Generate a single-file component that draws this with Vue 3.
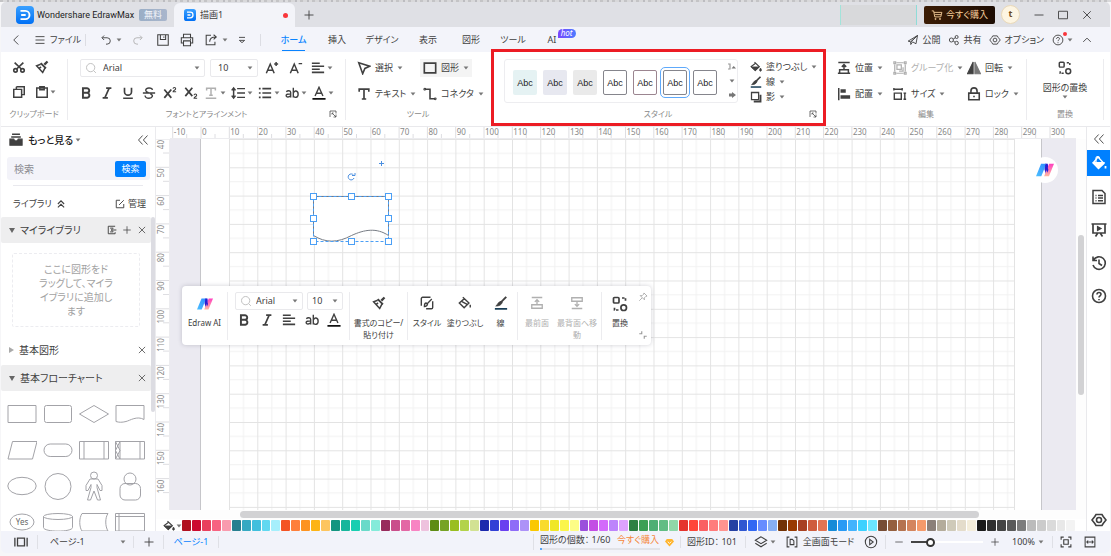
<script setup>
import { ref } from 'vue'

const query = ref('')
const zoom = ref(24)

const menus = ['挿入', 'デザイン', '表示', '図形', 'ツール']
const formats = [
  { icon: 'bold', label: '太字' },
  { icon: 'italic', label: '斜体' },
  { icon: 'underline', label: '下線' },
  { icon: 'strike', label: '取り消し線' },
  { icon: 'sup', label: '上付き' },
  { icon: 'sub', label: '下付き' }
]
const textTools = [
  { icon: 'textstyle', label: '文字効果', off: true },
  { icon: 'spacing', label: '行間' },
  { icon: 'list', label: '箇条書き' },
  { icon: 'case', label: '大文字と小文字' },
  { icon: 'fontcolor', label: '文字色' }
]
const arrange = [
  { icon: 'position', text: '位置' },
  { icon: 'group', text: 'グループ化', off: true },
  { icon: 'flip', text: '回転' },
  { icon: 'align', text: '配置' },
  { icon: 'size', text: 'サイズ' },
  { icon: 'lock', text: 'ロック' }
]
const swatches = ['teal', 'slate', 'gray', 'line', 'rose', 'line selected', 'line']

const palette = (
  'b0101f cc0a2f e9405d f76381 f99bae 277f90 36a9c2 41bfdd 61d8f0 a6effc ' +
  'f45323 fe7f3b fd9320 fdb415 fdc55f 139580 17b69c 19ceb1 6adac9 85ebda ' +
  '982b5c ca4e8b e368a5 f884c3 eec2de 5e8c14 76a325 99be20 b3d34a d2e293 ' +
  '1c29ad 3340d6 6a40f0 8f6cf8 ad92f8 fac800 f9db2d f0e726 fbf54a fdfd86 ' +
  '9b4fdc c34ee4 d36afb bd84fb dda2fd 2e8043 3b9f54 4faf74 61bd84 90d7a8 ' +
  'e5332d ff4639 fa6063 ff7c7c ff9490 2541a3 2f57d1 3268f3 668cff 87aff4 ' +
  '723205 993a00 a84022 cf5d3d e27453 158bd8 289af5 43b3fd 3cd1ff 6be6ff ' +
  '774d35 95603f b57350 d4855e f49a6b 8b8079 b4ac9b cfcab9 e4dccb f4eddb ' +
  '1a1a1a 303030 444444 5a5a5a 7c7c7c bbbbbb cbcbcb dadada e8e8e8 f3f3f3'
).split(' ').map(c => '#' + c)

const cm = 28.3
const xTicks = Array.from({ length: 32 }, (_, i) => ({ v: (i - 1) * 10, x: 31 + (i - 1) * cm }))
const yTicks = Array.from({ length: 13 }, (_, i) => ({ v: 40 + i * 10, y: i * cm }))
const handles = [[143, 57], [181, 57], [218, 57], [143, 79], [218, 79], [143, 102], [181, 102], [218, 102]]
</script>

<template>
  <div class="screen">
    <svg class="defs" aria-hidden="true">
      <defs>
        <linearGradient id="gBlue" x1="0" y1="0" x2="0" y2="1"><stop offset="0" stop-color="#3aa0ff" /><stop offset="1" stop-color="#0070f5" /></linearGradient>
        <linearGradient id="gL" x1="0" y1="1" x2="1" y2="0"><stop offset="0" stop-color="#4cc0ff" /><stop offset="1" stop-color="#2f8cff" /></linearGradient>
        <linearGradient id="gR" x1="0" y1="0" x2="0" y2="1"><stop offset="0" stop-color="#ff3fc0" /><stop offset="1" stop-color="#ffb9a0" /></linearGradient>
        <symbol id="i-caret" viewBox="0 0 6 6"><path d="M.6 1.600h4.800L3 4.600z" fill="currentColor" /></symbol>
        <symbol id="i-logo" viewBox="0 0 16 16"><rect width="16" height="16" rx="3.500" fill="url(#gBlue)" /><path d="M4 4.300h4.300a3.700 3.700 0 0 1 0 7.400H4M4.600 8h4" fill="none" stroke="#fff" stroke-width="1.700" /></symbol>
        <symbol id="i-ai" viewBox="0 0 16 16"><path d="M8 2.500h2.500L11.300 10l-2.500 2L7.500 7z" fill="#2a1fd0" /><path d="M4.500 2.500h4.700L4.700 13.500H0z" fill="url(#gL)" /><path d="M11.700 2.500H16l-4.500 11H7.200z" fill="url(#gR)" /><path d="M8 3.500 9.500 2.500 11 8l-1 2.500z" fill="#2a1fd0" /></symbol>
        <symbol id="i-back" viewBox="0 0 16 16"><path d="M11 2 5 8l6 6" /></symbol>
        <symbol id="i-menu" viewBox="0 0 16 16"><path d="M2 3.500h12M2 8h12M2 12.500h12" /></symbol>
        <symbol id="i-undo" viewBox="0 0 16 16"><path d="M5.500 2 2.500 5l3 3M3 5h6.500a4 4 0 0 1 0 8.500H8" /></symbol>
        <symbol id="i-redo" viewBox="0 0 16 16"><path d="M10.500 2l3 3-3 3M13 5H6.500a4 4 0 0 0 0 8.500H8" /></symbol>
        <symbol id="i-save" viewBox="0 0 16 16"><path d="M2 2h12v12H2zM5 2v5.500h6V2M9 4v1.500" /></symbol>
        <symbol id="i-print" viewBox="0 0 16 16"><path d="M4 5V1.500h8V5M4 11.500H1.500V5.500h13v6H12M4 9h8v5.500H4zM11.500 7.300h1" /></symbol>
        <symbol id="i-export" viewBox="0 0 16 16"><path d="M8 2.500H2.500v11h10V10M6.500 10c0-4 2.500-5.500 7-5.500M11 2l3 2.500-3 2.700" /></symbol>
        <symbol id="i-more" viewBox="0 0 16 16"><path d="M4 4.500h8M4.500 8.500 8 11.500l3.500-3z" /></symbol>
        <symbol id="i-plane" viewBox="0 0 16 16"><path d="M14 2 1.500 9.500l3.500 1zM14 2 12 13 7.500 10.500M14 2 5 10.500V14l2.500-3.500" /></symbol>
        <symbol id="i-share" viewBox="0 0 16 16"><circle cx="4.500" cy="8" r="2.700" /><circle cx="11.500" cy="4" r="2" /><circle cx="11.500" cy="12" r="2.300" /><path d="M7 6.700 9.800 5M7 9.500l2.400 1.400" /></symbol>
        <symbol id="i-gear" viewBox="0 0 16 16"><path d="M5 2.500h6l1.200 2 2.800 3.500-2.800 3.500-1.200 2H5l-1.200-2L1 8l2.800-3.500z" /><circle cx="8" cy="8" r="2.500" /></symbol>
        <symbol id="i-help" viewBox="0 0 16 16"><circle cx="8" cy="8" r="6.500" /><path d="M6 6.500C6 3.800 10 4 10 6.300 10 7.800 8 7.900 8 9.500M8 11v1.200" /></symbol>
        <symbol id="i-up" viewBox="0 0 16 16"><path d="m3 10.500 5-5 5 5" /></symbol>
        <symbol id="i-min" viewBox="0 0 16 16"><path d="M2 8h12" /></symbol>
        <symbol id="i-box" viewBox="0 0 16 16"><path d="M2 3h12v10H2z" /></symbol>
        <symbol id="i-x" viewBox="0 0 16 16"><path d="m3 3 10 10M13 3 3 13" /></symbol>
        <symbol id="i-plus" viewBox="0 0 16 16"><path d="M8 2v12M2 8h12" /></symbol>
        <symbol id="i-cart" viewBox="0 0 16 16"><path d="M1 2.500h2.500L5 10.500h8l1.500-6H4M5.500 7.500H13.500" /><circle cx="6" cy="13.300" r=".8" /><circle cx="12" cy="13.300" r=".8" /></symbol>
        <symbol id="i-cut" viewBox="0 0 16 16"><g stroke-width="1.900"><circle cx="4" cy="11.800" r="2" /><circle cx="12" cy="11.800" r="2" /><path d="M5.300 10.300 13 3M10.700 10.300 3 3" /></g></symbol>
        <symbol id="i-brush" viewBox="0 0 16 16"><path d="m14.300 1.700-3.600 3.600" stroke-width="2.600" /><path d="M6.500 3.500l6 6" stroke-width="2.200" /><path d="M6.500 4.800 1.800 6.700l7 7.500L11.500 9M4.500 9.500 7 8" stroke-width="1.700" /></symbol>
        <symbol id="i-copy" viewBox="0 0 16 16"><path d="M2 5h9v9H2zM5 2h9v9h-3M5 2v3" stroke-width="1.700" /></symbol>
        <symbol id="i-paste" viewBox="0 0 16 16"><path d="M2 3.500h12V14H2zM5.500 2h5v3.500h-5z" stroke-width="1.700" /></symbol>
        <symbol id="i-search" viewBox="0 0 16 16"><circle cx="7.500" cy="7.500" r="5.500" /><path d="m11.500 11.500 3 3" /></symbol>
        <symbol id="i-aplus" viewBox="0 0 16 16"><path d="M1.500 14 6 3.500 10.500 14M3.300 10.500h5.400M10.500 3.500H15M12.700 1.200v4.600" stroke-width="1.700" /></symbol>
        <symbol id="i-aminus" viewBox="0 0 16 16"><path d="M1.500 14 6 3.500 10.500 14M3.300 10.500h5.400M11 3h4" stroke-width="1.700" /></symbol>
        <symbol id="i-textalign" viewBox="0 0 16 16"><path d="M1 2.500h9M1 6h14M1 9.500h9M1 13h14" stroke-width="1.800" /></symbol>
        <symbol id="i-bold" viewBox="0 0 16 16"><path d="M4.500 2.500H9a2.600 2.600 0 0 1 0 5.300H4.500zM4.500 7.800h5a2.900 2.900 0 0 1 0 5.700h-5z" stroke-width="2.200" /></symbol>
        <symbol id="i-italic" viewBox="0 0 16 16"><path d="M7 2.500h6M3 13.500h6M10.500 2.500l-5 11" stroke-width="1.900" /></symbol>
        <symbol id="i-underline" viewBox="0 0 16 16"><path d="M4 2v4.500a4 4 0 0 0 8 0V2M2.500 14h11" stroke-width="1.900" /></symbol>
        <symbol id="i-strike" viewBox="0 0 16 16"><path d="M12 4.500C11.500 1.500 4 1.500 4.300 5c.2 1.500 1.500 2 3.200 2.500M1 8h14M9.500 9c4 1.500 2.500 5-1.500 5-3 0-4.300-1.300-4.500-3.200" stroke-width="1.600" /></symbol>
        <symbol id="i-sup" viewBox="0 0 16 16"><path d="m1.500 4 8 9.500M9.500 4l-8 9.500" stroke-width="2" /><path d="M11.500 3.200c0-2 3-2 3 0 0 1.300-3 2-3 3.300h3.500" stroke-width="1.200" /></symbol>
        <symbol id="i-sub" viewBox="0 0 16 16"><path d="m1.500 2 8 9.500M9.500 2l-8 9.500" stroke-width="2" /><path d="M11.500 10.700c0-2 3-2 3 0 0 1.300-3 2-3 3.300h3.500" stroke-width="1.200" /></symbol>
        <symbol id="i-textstyle" viewBox="0 0 16 16"><path d="M3 5V2.500h10V5M8 2.500v8M6 10.500h4M2 14h12" stroke-width="1.700" /></symbol>
        <symbol id="i-spacing" viewBox="0 0 16 16"><path d="M7 3h9M7 8h9M7 13h9M3 3v10M.8 5 3 2.300 5.200 5M.8 11 3 13.700 5.200 11" stroke-width="1.700" /></symbol>
        <symbol id="i-list" viewBox="0 0 16 16"><path d="M5 3h10M5 8h10M5 13h10M1 3h2M1 8h2M1 13h2" stroke-width="1.800" /></symbol>
        <symbol id="i-case" viewBox="0 0 16 16"><path d="M1.500 6.500C3 5 6.500 5 6.500 7.500V13M6.500 9C3 9 1.300 9.500 1.300 11s3 2.500 5.200 0M9.500 2v11M9.500 8c1-3.500 5.500-3 5.500 1.300S10.500 14 9.500 11" stroke-width="1.600" /></symbol>
        <symbol id="i-fontcolor" viewBox="0 0 16 16"><path d="m3.500 11.500 4.500-10 4.500 10M5 8.300h6" stroke-width="1.600" /><path d="M.5 14.700h15" stroke="#111" stroke-width="2" /></symbol>
        <symbol id="i-select" viewBox="0 0 16 16"><path d="M2 2 14.500 6 9 8.500 6.500 14.500z" stroke-width="1.800" /></symbol>
        <symbol id="i-rect" viewBox="0 0 16 16"><path d="M1.500 2.500h13v11h-13z" stroke-width="1.900" /></symbol>
        <symbol id="i-text" viewBox="0 0 16 16"><path d="M2.500 5.500V2.500h11v3M8 2.500v11M5.500 13.700h5" stroke-width="1.900" /></symbol>
        <symbol id="i-connector" viewBox="0 0 16 16"><path d="M2 2.500h6v11h6" stroke-width="1.800" /><circle cx="2" cy="2.500" r="1" /><circle cx="14" cy="13.500" r="1" /></symbol>
        <symbol id="i-fill" viewBox="0 0 16 16"><path d="m6 1.500 6.500 6.300-5.500 5-5.500-5.300L7.500 3" stroke-width="1.500" /><path d="M2 8h10l-5 4.700z" fill="currentColor" /><path d="M14 9.500c1.500 2 1.500 4 0 4s-1.500-2 0-4z" fill="currentColor" /></symbol>
        <symbol id="i-fillopen" viewBox="0 0 16 16"><path d="m5.500 1.500 7 6.500-5.500 5.500L1.500 8 7.300 3M4.500 6.500l6 3M14 10v3" stroke-width="1.600" /></symbol>
        <symbol id="i-pen" viewBox="0 0 16 16"><path d="m14 1-6.500 6.500" stroke-width="2.200" /><path d="m8 6 1.500 1.500C8 11 5 11.500 2 11.500 4.500 10 4 7 8 6z" fill="currentColor" stroke-width=".8" /><path d="M1 14.700h14" stroke="#173c55" stroke-width="2" /></symbol>
        <symbol id="i-shadow" viewBox="0 0 16 16"><path d="M2 2h9.500v9.500H2z" stroke-width="1.700" /><path d="M5 14h9V5" stroke-width="2.500" /></symbol>
        <symbol id="i-launch" viewBox="0 0 16 16"><path d="M2 14V2h12v5M14 14 6.500 6.500M14 9v5H9M6 9V6h3" stroke-width="1.500" /></symbol>
        <symbol id="i-position" viewBox="0 0 16 16"><path d="M1.500 1.700h13M3 10h10v4H3zM8 10V4.500M5.500 6.700 8 4.200l2.500 2.500M1 14h14" stroke-width="1.700" /></symbol>
        <symbol id="i-align" viewBox="0 0 16 16"><path d="M2 1v14" stroke-width="1.700" /><path d="M4 4.500h6M4 11.500h11" stroke-width="4" /></symbol>
        <symbol id="i-group" viewBox="0 0 16 16"><path d="M2 4v8M14 4v8M4 2h8M4 14h8M1 1h2v2H1zM13 1h2v2h-2zM1 13h2v2H1zM13 13h2v2h-2zM4.500 4.500h5v5h-5zM7 11.500h4.500V7" stroke-width="1.400" /></symbol>
        <symbol id="i-size" viewBox="0 0 16 16"><path d="M1 2.500h9.500M1 1v3M10.500 1v3M1.500 7h8v7h-8zM13.500 7v7M12 7h3M12 14h3" stroke-width="1.600" /></symbol>
        <symbol id="i-flip" viewBox="0 0 16 16"><path d="M7 1v13.500H.5z" fill="currentColor" /><path d="M9 1v13.500h6.500z" fill="currentColor" opacity=".7" /></symbol>
        <symbol id="i-lock" viewBox="0 0 16 16"><path d="M2 7h12v7.500H2zM4.500 7V4.500a3.500 3.500 0 0 1 7 0V7M8 10v1.700" stroke-width="1.800" /></symbol>
        <symbol id="i-replace" viewBox="0 0 16 16"><rect x="1.500" y="1.500" width="5.500" height="5.500" rx="1" stroke-width="1.700" /><circle cx="11.700" cy="11.700" r="2.800" stroke-width="1.700" /><path d="M10 2h3.500v3.500M6.500 14H2.500v-3.500" stroke-width="1.700" stroke-dasharray="2.500 1.200" /></symbol>
        <symbol id="i-drawer" viewBox="0 0 16 16"><path d="M3.500 1.500h9M2.500 4.500h11" stroke-width="1.700" /><path d="M1 7h4.500l1 2h3l1-2H15v7H1z" fill="currentColor" /></symbol>
        <symbol id="i-dleft" viewBox="0 0 16 16"><path d="M7.500 2 2 8l5.500 6M14 2 8.500 8l5.500 6" /></symbol>
        <symbol id="i-dup" viewBox="0 0 16 16"><path d="m3 8 5-5 5 5M3 13.500l5-5 5 5" stroke-width="1.800" /></symbol>
        <symbol id="i-edit" viewBox="0 0 16 16"><path d="M8 2H2v12h12V8M6.500 9.500 14 2" stroke-width="1.500" /></symbol>
        <symbol id="i-import" viewBox="0 0 16 16"><path d="M13 2H2v12h11v-2.500M5 5h5M5 11h5M15 8H7M9.500 5.500 7 8l2.500 2.500" stroke-width="1.500" /></symbol>
        <symbol id="i-styles" viewBox="0 0 16 16"><path d="M12 1.500H3a1.500 1.500 0 0 0-1.500 1.500V11M14.500 6v7a1.500 1.500 0 0 1-1.500 1.500H7" stroke-width="1.600" /><path d="m13.500 3.500-5 5M5 12c1 0 3-.5 3.500-2.500L7 8c-2 0-2 2-2 4z" stroke-width="1.500" /></symbol>
        <symbol id="i-front" viewBox="0 0 16 16"><path d="M2 1.700h12M2 10h12v4H2zM8 10V4.500M5.500 6.700 8 4.200l2.500 2.500" stroke-width="1.500" /></symbol>
        <symbol id="i-rear" viewBox="0 0 16 16"><path d="M2 14.300h12M2 2h12v4H2zM8 6v5.500M5.500 9.300 8 11.800l2.500-2.500" stroke-width="1.500" /></symbol>
        <symbol id="i-pin" viewBox="0 0 16 16"><path d="m9.500 1.500 5 5-2 .5-2.500 2.500.3 3-6.800-6.800 3 .3L9 3.500zM6.500 9.500l-4.500 4.500" /></symbol>
        <symbol id="i-shrink" viewBox="0 0 16 16"><path d="M2 6h4V2M14 10h-4v4" stroke-width="1.800" /></symbol>
        <symbol id="i-doc" viewBox="0 0 16 16"><path d="M2 1.500h9l3 3v10H2zM4.500 6.500h1M7 6.500h5M4.500 9h1M7 9h5M4.500 11.700h1M7 11.700h5" stroke-width="1.500" /></symbol>
        <symbol id="i-present" viewBox="0 0 16 16"><path d="M.5 2h15M2 2v9h12V2M4.500 14.500l2-3M11.500 14.500l-2-3" stroke-width="1.700" /><path d="M6.500 4.500v4l3.500-2z" fill="currentColor" /></symbol>
        <symbol id="i-history" viewBox="0 0 16 16"><path d="M2.500 5A6.300 6.300 0 1 1 2 10M2 1.500V5.500h4M8 4.500V8.500l3 2" stroke-width="1.600" /></symbol>
        <symbol id="i-bucket" viewBox="0 0 16 16"><path d="m7 2 6 6.500-5.500 5L2 8z" stroke-width="1.300" /><path d="M2.500 7.500h10.300L7.500 13z" fill="currentColor" /><path d="M5 7.500V3.500C5 .8 8.500.8 8.500 3.500" /><path d="M14.500 11v2.500" stroke-width="1.800" /></symbol>
        <symbol id="i-pages" viewBox="0 0 16 16"><path d="M4 3.500h8v9H4zM1 3v10M15 3v10" stroke-width="1.500" /></symbol>
        <symbol id="i-layers" viewBox="0 0 16 16"><path d="M8 2 1.500 6 8 10l6.500-4zM1.500 9.500l6.500 4 6.500-4" /></symbol>
        <symbol id="i-focus" viewBox="0 0 16 16"><path d="M4.500 1.500h-3v13h3M11.500 1.500h3v13h-3M5.500 4.500h3L10.500 6.500v5h-5z" stroke-width="1.400" /></symbol>
        <symbol id="i-play" viewBox="0 0 16 16"><circle cx="8" cy="8" r="6.500" /><path d="M6.500 5v6l4-3z" /></symbol>
        <symbol id="i-fit" viewBox="0 0 16 16"><path d="M1.500 5V1.500H5M11 1.500h3.500V5M14.500 11v3.500H11M5 14.500H1.500V11M5 5h6v6H5z" stroke-width="1.500" /></symbol>
        <symbol id="i-fitw" viewBox="0 0 16 16"><path d="M1.500 1.500h13v13h-13zM4 8h8M5.500 6 3.700 8l1.800 2M10.500 6l1.800 2-1.800 2" stroke-width="1.400" /></symbol>
      </defs>
    </svg>

    <header class="title">
      <svg class="ic logo"><use href="#i-logo" /></svg>
      <span class="brand">Wondershare EdrawMax</span>
      <span class="free">無料</span>
      <div class="doctab">
        <svg class="ic s12"><use href="#i-logo" /></svg>
        <span>描画1</span>
        <i class="dot"></i>
      </div>
      <button class="b newtab" aria-label="新しいタブ"><svg class="ic s12"><use href="#i-plus" /></svg></button>
      <span class="grow"></span>
      <span class="masked"></span>
      <button class="buy"><svg class="ic s12"><use href="#i-cart" /></svg>今すぐ購入</button>
      <span class="avatar">t</span>
      <button class="b win" aria-label="最小化"><svg class="ic s12"><use href="#i-min" /></svg></button>
      <button class="b win" aria-label="最大化"><svg class="ic s12"><use href="#i-box" /></svg></button>
      <button class="b win" aria-label="閉じる"><svg class="ic s12"><use href="#i-x" /></svg></button>
    </header>

    <nav class="menubar">
      <button class="b w30" aria-label="戻る"><svg class="ic s12"><use href="#i-back" /></svg></button>
      <button class="b file"><svg class="ic s12"><use href="#i-menu" /></svg>ファイル</button>
      <i class="vr"></i>
      <div class="quick">
        <button class="b" aria-label="元に戻す"><svg class="ic s12"><use href="#i-undo" /></svg><svg class="caret"><use href="#i-caret" /></svg></button>
        <button class="b off" aria-label="やり直し"><svg class="ic s12"><use href="#i-redo" /></svg></button>
        <button class="b" aria-label="保存"><svg class="ic s14"><use href="#i-save" /></svg></button>
        <button class="b" aria-label="印刷"><svg class="ic s14"><use href="#i-print" /></svg></button>
        <button class="b" aria-label="エクスポート"><svg class="ic s14"><use href="#i-export" /></svg><svg class="caret"><use href="#i-caret" /></svg></button>
        <button class="b" aria-label="その他"><svg class="ic s12"><use href="#i-more" /></svg></button>
      </div>
      <i class="vr"></i>
      <div class="tabs">
        <a class="on" href="#home"><span>ホーム</span></a>
        <a v-for="m in menus" :key="m" :href="'#' + m">{{ m }}</a>
        <a href="#ai"><span>AI<em>hot</em></span></a>
      </div>
      <span class="grow"></span>
      <div class="links">
        <button class="b"><svg class="ic s12"><use href="#i-plane" /></svg>公開</button>
        <button class="b"><svg class="ic s12"><use href="#i-share" /></svg>共有</button>
        <button class="b"><svg class="ic s12"><use href="#i-gear" /></svg>オプション</button>
        <button class="b help" aria-label="ヘルプ"><svg class="ic s12"><use href="#i-help" /></svg><i class="dot"></i><svg class="caret"><use href="#i-caret" /></svg></button>
        <button class="b" aria-label="リボンを折りたたむ"><svg class="ic s12"><use href="#i-up" /></svg></button>
      </div>
    </nav>

    <section class="ribbon">
      <div class="group clip">
        <div class="row"><button class="b" aria-label="切り取り"><svg class="ic s14"><use href="#i-cut" /></svg></button><button class="b" aria-label="書式のコピー"><svg class="ic s14"><use href="#i-brush" /></svg></button></div>
        <div class="row"><button class="b" aria-label="コピー"><svg class="ic s14"><use href="#i-copy" /></svg></button><button class="b" aria-label="貼り付け"><svg class="ic s14"><use href="#i-paste" /></svg><svg class="caret"><use href="#i-caret" /></svg></button></div>
        <p>クリップボード</p>
      </div>
      <div class="group font">
        <div class="row first">
          <label class="combo family"><svg class="ic s12 pale"><use href="#i-search" /></svg><select aria-label="フォント"><option>Arial</option></select><svg class="caret"><use href="#i-caret" /></svg></label>
          <label class="combo points"><select aria-label="サイズ"><option>10</option></select><svg class="caret"><use href="#i-caret" /></svg></label>
          <button class="b w24" aria-label="拡大"><svg class="ic s14"><use href="#i-aplus" /></svg></button>
          <button class="b w24" aria-label="縮小"><svg class="ic s14"><use href="#i-aminus" /></svg></button>
          <button class="b drop" aria-label="文字揃え"><svg class="ic s14"><use href="#i-textalign" /></svg><svg class="caret"><use href="#i-caret" /></svg></button>
        </div>
        <div class="row">
          <button v-for="f in formats" :key="f.icon" class="b w21" :aria-label="f.label"><svg class="ic s14"><use :href="'#i-' + f.icon" /></svg></button>
          <button v-for="f in textTools" :key="f.icon" class="b drop" :class="{ off: f.off }" :aria-label="f.label"><svg class="ic s14"><use :href="'#i-' + f.icon" /></svg><svg class="caret"><use href="#i-caret" /></svg></button>
        </div>
        <p>フォントとアラインメント</p>
        <button class="b launch" aria-label="フォント設定"><svg class="ic s8"><use href="#i-launch" /></svg></button>
      </div>
      <div class="group tools">
        <div class="pairs">
          <button class="b lab"><svg class="ic s14"><use href="#i-select" /></svg>選択<svg class="caret"><use href="#i-caret" /></svg></button>
          <button class="b lab pressed"><svg class="ic s14"><use href="#i-rect" /></svg>図形<svg class="caret"><use href="#i-caret" /></svg></button>
          <button class="b lab"><svg class="ic s14"><use href="#i-text" /></svg>テキスト<svg class="caret"><use href="#i-caret" /></svg></button>
          <button class="b lab second"><svg class="ic s14"><use href="#i-connector" /></svg>コネクタ<svg class="caret"><use href="#i-caret" /></svg></button>
        </div>
        <p>ツール</p>
      </div>
      <div class="group style">
        <div class="stylebody">
          <div class="gallery">
            <button v-for="(s, i) in swatches" :key="i" class="sw" :class="s">Abc</button>
            <div class="scroller">
              <button class="b" aria-label="上へ"><svg class="ic s8" viewBox="0 0 8 8"><path d="M0 1h2v5H0" stroke="#999" /><path d="M3.500 5.500h4.500L5.700 3z" fill="#777" stroke="none" /></svg></button>
              <button class="b" aria-label="下へ"><svg class="caret"><use href="#i-caret" /></svg></button>
              <button class="b" aria-label="すべて表示"><svg class="ic s8" viewBox="0 0 8 8"><path d="M1 2.500h3V1l4 3-4 3V5.500H1z" fill="#777" stroke="none" /></svg></button>
            </div>
          </div>
          <div class="effects">
            <button class="b lab"><svg class="ic s12"><use href="#i-fill" /></svg>塗りつぶし<svg class="caret"><use href="#i-caret" /></svg></button>
            <button class="b lab"><svg class="ic s12"><use href="#i-pen" /></svg>線<svg class="caret"><use href="#i-caret" /></svg></button>
            <button class="b lab"><svg class="ic s12"><use href="#i-shadow" /></svg>影<svg class="caret"><use href="#i-caret" /></svg></button>
          </div>
        </div>
        <p>スタイル</p>
        <button class="b launch" aria-label="スタイル設定"><svg class="ic s8"><use href="#i-launch" /></svg></button>
      </div>
      <div class="group arrange">
        <div class="triples">
          <button v-for="a in arrange" :key="a.icon" class="b lab" :class="{ off: a.off }"><svg class="ic s14"><use :href="'#i-' + a.icon" /></svg>{{ a.text }}<svg class="caret"><use href="#i-caret" /></svg></button>
        </div>
        <p>編集</p>
      </div>
      <div class="group swap">
        <button class="b tall"><svg class="ic s14"><use href="#i-replace" /></svg>図形の置換<svg class="caret"><use href="#i-caret" /></svg></button>
        <p>置換</p>
      </div>
    </section>

    <main class="body">
      <aside class="panel">
        <div class="phead"><svg class="ic s14"><use href="#i-drawer" /></svg><b>もっと見る</b><svg class="caret"><use href="#i-caret" /></svg><span class="grow"></span><button class="b" aria-label="パネルを閉じる"><svg class="ic s12"><use href="#i-dleft" /></svg></button></div>
        <form class="search" @submit.prevent><input v-model="query" type="text" placeholder="検索" aria-label="図形を検索"><button>検索</button></form>
        <hr>
        <div class="lib"><span>ライブラリ</span><svg class="ic s10"><use href="#i-dup" /></svg><span class="grow"></span><button class="b"><svg class="ic s10"><use href="#i-edit" /></svg>管理</button></div>
        <div class="scrollable">
          <div class="sect open"><i class="tri"></i>マイライブラリ<span class="grow"></span>
            <button class="b" aria-label="読み込み"><svg class="ic s10"><use href="#i-import" /></svg></button>
            <button class="b" aria-label="追加"><svg class="ic s10"><use href="#i-plus" /></svg></button>
            <button class="b" aria-label="閉じる"><svg class="ic s10"><use href="#i-x" /></svg></button>
          </div>
          <div class="dropzone">ここに図形をド<br>ラッグして、マイラ<br>イブラリに追加し<br>ます</div>
          <div class="sect"><i class="tri side"></i>基本図形<span class="grow"></span><button class="b" aria-label="閉じる"><svg class="ic s10"><use href="#i-x" /></svg></button></div>
          <div class="sect open last"><i class="tri"></i>基本フローチャート<span class="grow"></span><button class="b" aria-label="閉じる"><svg class="ic s10"><use href="#i-x" /></svg></button></div>
          <div class="shapes">
            <svg viewBox="0 0 30 30"><path d="M1 6.500h28v17H1z" /></svg>
            <svg viewBox="0 0 30 30"><rect x="1.500" y="6.500" width="27" height="17" rx="2" /></svg>
            <svg viewBox="0 0 30 30"><path d="m15 6.500 14.500 8.500L15 23.500.5 15z" /></svg>
            <svg viewBox="0 0 30 30"><path d="M1 6.500h28v14c-7-4-14 1-18 2-4 1-7 1-10 0z" /></svg>
            <svg viewBox="0 0 30 30"><path d="M5.500 6.500H30L25.500 24H1z" /></svg>
            <svg viewBox="0 0 30 30"><rect x="1" y="9" width="28" height="12.500" rx="6.200" /></svg>
            <svg viewBox="0 0 30 30"><path d="M.5 6.500h29V24H.5zM5 6.500V24M25 6.500V24" /></svg>
            <svg viewBox="0 0 30 30"><path d="M.5 6.500h29V24H.5zM5 6.500V24M25 6.500V24M.5 6.500 5 15.500.5 24M5 6.500.5 15.500 5 24" /></svg>
            <svg viewBox="0 0 30 30"><ellipse cx="15" cy="15" rx="14.200" ry="8.700" /></svg>
            <svg viewBox="0 0 30 30"><circle cx="15" cy="15.500" r="13" /></svg>
            <svg viewBox="0 0 30 30"><circle cx="15" cy="4.500" r="3.500" /><path d="M11 8h8l4 6.500v5h-2l-3-6v3L21.500 29h-3L15 20l-3.500 9h-3L12 16.500v-3l-3 6H7v-5z" /></svg>
            <svg viewBox="0 0 30 30"><circle cx="15" cy="8" r="6" /><rect x="5" y="12.500" width="20.500" height="16.500" rx="5" /></svg>
            <svg viewBox="0 0 30 30"><ellipse cx="15" cy="15" rx="12" ry="8" /><text x="15" y="18">Yes</text></svg>
            <svg viewBox="0 0 30 30"><path d="M.5 9.500v11C.500 25.300 29.500 25.300 29.500 20.500v-11" /><ellipse cx="15" cy="9.500" rx="14.500" ry="3" /></svg>
            <svg viewBox="0 0 30 30"><path d="M3 6.500h26c-3 4-3 13 0 17.500H3c-3-4-3-13 0-17.500z" /></svg>
            <svg viewBox="0 0 30 30"><path d="M.5 6.500h29V24H.5zM4 6.500V24M.5 9.500h29" /></svg>
          </div>
        </div>
      </aside>

      <section class="work">
        <div class="corner"></div>
        <svg class="hruler">
          <g v-for="t in xTicks" :key="t.v">
            <path :d="`M${t.x} 0V13M${t.x + 14} 7V13`" />
            <text :x="t.x + 1" y="8">{{ t.v }}</text>
          </g>
        </svg>
        <div class="corner"></div>
        <svg class="vruler">
          <g v-for="t in yTicks" :key="t.v">
            <path :d="`M0 ${t.y}H14M7 ${t.y + 14}H14`" />
            <text :transform="`translate(8 ${t.y + 1}) rotate(-90)`">{{ t.v }}</text>
          </g>
        </svg>
        <div class="canvas">
          <svg class="sheet">
            <defs>
              <pattern id="grid" x="59" y="0" width="28.300" height="28.300" patternUnits="userSpaceOnUse">
                <path d="M14.500 0V28.300M0 14.500H28.300" stroke="#f1f1f1" fill="none" />
                <path d="M.5 0V28.300M0 .5H28.300" stroke="#e3e3e3" fill="none" />
              </pattern>
            </defs>
            <rect x="30.500" y="-5" width="841" height="700" fill="#fff" stroke="#c6c6ca" />
            <rect x="59" y="0" width="785" height="700" fill="url(#grid)" />
            <path d="M844.500 0V700" stroke="#e3e3e3" />
            <path class="doc" d="M143.500 57.500h75V96.500c-12-8-24-6-37 0-14 7.500-26 7.500-38 0z" />
            <path class="sel" d="M143.500 57.500h75v45h-75z" />
            <rect v-for="(h, i) in handles" :key="i" class="handle" :x="h[0] - 2.5" :y="h[1] - 2.5" width="6" height="6" />
            <path class="rot" d="M183.500 36a3 3 0 1 0 .5 3M182 36.500h3v-2.500" />
            <path class="rot" d="M209 24.500h5M211.500 22v5" />
          </svg>
          <button class="aibadge" aria-label="Edraw AI"><svg class="ic"><use href="#i-ai" /></svg></button>
          <div class="float">
            <button class="b cell ai"><svg class="ic s16"><use href="#i-ai" /></svg>Edraw AI</button>
            <div class="mini">
              <div class="row">
                <label class="combo family"><svg class="ic s12 pale"><use href="#i-search" /></svg><select aria-label="フォント"><option>Arial</option></select><svg class="caret"><use href="#i-caret" /></svg></label>
                <label class="combo points"><select aria-label="サイズ"><option>10</option></select><svg class="caret"><use href="#i-caret" /></svg></label>
              </div>
              <div class="row spread">
                <button v-for="n in ['bold', 'italic', 'textalign', 'case', 'fontcolor']" :key="n" class="b" :aria-label="n"><svg class="ic s14"><use :href="'#i-' + n" /></svg></button>
              </div>
            </div>
            <button class="b cell copyfmt"><svg class="ic s14"><use href="#i-brush" /></svg><span>書式のコピー/<br>貼り付け</span></button>
            <div class="trio">
              <button class="b cell"><svg class="ic s14"><use href="#i-styles" /></svg>スタイル</button>
              <button class="b cell"><svg class="ic s14"><use href="#i-fillopen" /></svg>塗りつぶし</button>
              <button class="b cell"><svg class="ic s14"><use href="#i-pen" /></svg>線</button>
            </div>
            <div class="duo">
              <button class="b cell off"><svg class="ic s14"><use href="#i-front" /></svg>最前面</button>
              <button class="b cell off"><svg class="ic s14"><use href="#i-rear" /></svg><span>最背面へ移<br>動</span></button>
            </div>
            <button class="b cell rep"><svg class="ic s16"><use href="#i-replace" /></svg>置換</button>
            <div class="pins"><svg class="ic s10"><use href="#i-pin" /></svg><svg class="ic s10"><use href="#i-shrink" /></svg></div>
          </div>
        </div>
        <div class="vscroll"><i></i></div>
        <div class="hscroll"><i></i></div>
        <div class="colors">
          <button class="b bucket" aria-label="塗りつぶし色"><svg class="ic s12"><use href="#i-fill" /></svg><svg class="caret"><use href="#i-caret" /></svg></button>
          <i v-for="(c, i) in palette" :key="i" class="chip" :style="{ background: c }"></i>
        </div>
      </section>

      <aside class="rail">
        <button class="b slim" aria-label="展開"><svg class="ic s12"><use href="#i-dleft" /></svg></button>
        <button class="b active" aria-label="塗りつぶし"><svg class="ic s16"><use href="#i-bucket" /></svg></button>
        <button class="b" aria-label="ページ"><svg class="ic s16"><use href="#i-doc" /></svg></button>
        <button class="b" aria-label="プレゼンテーション"><svg class="ic s16"><use href="#i-present" /></svg></button>
        <button class="b" aria-label="履歴"><svg class="ic s16"><use href="#i-history" /></svg></button>
        <button class="b" aria-label="ヘルプ"><svg class="ic s16 thick"><use href="#i-help" /></svg></button>
        <span class="grow"></span>
        <button class="b slim" aria-label="設定"><svg class="ic s16 thick"><use href="#i-gear" /></svg></button>
      </aside>
    </main>

    <footer class="status">
      <button class="b pages" aria-label="ページ一覧"><svg class="ic s14"><use href="#i-pages" /></svg></button>
      <label class="pagesel"><select aria-label="ページ"><option>ページ-1</option></select><svg class="caret"><use href="#i-caret" /></svg></label>
      <button class="b add" aria-label="ページを追加"><svg class="ic s12"><use href="#i-plus" /></svg></button>
      <a class="page" href="#page1">ページ-1</a>
      <span class="grow"></span>
      <div class="count">
        <div><span>図形の個数： 1/60</span><a href="#buy">今すぐ購入</a></div>
        <progress value="1" max="60" aria-label="図形の個数"></progress>
      </div>
      <svg class="gem" viewBox="0 0 10 10"><path d="M2 1h6l2 3-5 5.500L0 4z" fill="#ffb52e" /><path d="m3 4 2 2 2-2" fill="none" stroke="#fff" /></svg>
      <span class="ident">図形ID： 101</span>
      <div class="modes">
        <button class="b" aria-label="レイヤー"><svg class="ic s14"><use href="#i-layers" /></svg><svg class="caret"><use href="#i-caret" /></svg></button>
        <button class="b full"><svg class="ic s12"><use href="#i-focus" /></svg>全画面モード</button>
        <button class="b" aria-label="再生"><svg class="ic s14"><use href="#i-play" /></svg></button>
      </div>
      <div class="zoom">
        <button class="b" aria-label="縮小"><svg class="ic s10"><use href="#i-min" /></svg></button>
        <input v-model="zoom" type="range" min="0" max="100" aria-label="ズーム">
        <button class="b" aria-label="拡大"><svg class="ic s10"><use href="#i-plus" /></svg></button>
        <button class="b pct">100%<svg class="caret"><use href="#i-caret" /></svg></button>
      </div>
      <div class="fits">
        <button class="b" aria-label="全体表示"><svg class="ic s12"><use href="#i-fit" /></svg></button>
        <button class="b" aria-label="幅に合わせる"><svg class="ic s12"><use href="#i-fitw" /></svg></button>
      </div>
    </footer>
  </div>
</template>

<style>
html, body { margin: 0; background: #f4f4f5; }
</style>

<style scoped>
.screen {
  display: flex; flex-direction: column; height: 100vh; min-height: 480px; padding: 2px 1px 3px; box-sizing: border-box;
  background: repeating-linear-gradient(90deg, #c4c4c6 0 3px, #d8d8da 3px 7px, #bcbcc0 7px 9px, #dcdcde 9px 12px) top / 100% 2px no-repeat, #f6f6f8;
  color: #404040; font: 9px/12px "Noto Sans", "Noto Sans CJK JP", sans-serif; font-feature-settings: "palt";
}
.screen * { box-sizing: border-box; }
.defs { position: absolute; width: 0; height: 0; }
.grow { flex: 1; }
.b { display: flex; align-items: center; justify-content: center; padding: 0; border: 0; background: none; color: inherit; font: inherit; font-feature-settings: inherit; white-space: nowrap; }
.ic { flex: none; width: 14px; height: 14px; fill: none; stroke: currentColor; stroke-width: 1.2; color: #404040; }
.s8 { width: 8px; height: 8px; }
.s10 { width: 10px; height: 10px; }
.s12 { width: 12px; height: 12px; }
.s14 { width: 14px; height: 14px; }
.s16 { width: 16px; height: 16px; }
.thick { stroke-width: 1.6; }
.ic.pale { color: #bbb; }
.ic.logo { width: 18px; height: 18px; }
.logo, .doctab .ic, .aibadge .ic, .ai .ic { stroke: none; }
.caret { flex: none; width: 6px; height: 6px; color: #777; }
.off, .off .ic { color: #b0b0b0; }
.dot { width: 5px; height: 5px; border-radius: 50%; background: #f9363b; }
.vr { width: 1px; height: 12px; background: #dcdde3; }
select { appearance: none; flex: 1; min-width: 0; border: 0; padding: 0; background: none; color: inherit; font: inherit; font-feature-settings: inherit; }

.title { display: flex; align-items: center; flex: none; height: 25px; padding: 0 11px 0 15px; background: #dfe0e5; border-radius: 5px 5px 0 0; }
.brand { margin-left: 3px; width: 98px; white-space: nowrap; color: #222; font-family: Roboto, sans-serif; }
.free { margin-left: 4px; padding: 0 5px; border-radius: 2px; background: linear-gradient(90deg, #9aaec6, #a9b6cc); color: #f2f5fa; }
.doctab { display: flex; align-items: center; gap: 4px; width: 121px; height: 24px; margin: 1px 0 0 7px; padding: 0 7px 0 10px; border-radius: 6px 6px 0 0; background: #f3f4f9; }
.doctab .dot { margin-left: auto; }
.newtab { width: 28px; }
.masked { width: 77px; height: 20px; background: #d8d9db; border-left: 1px solid #a2e3da; border-right: 1px solid #8fdcd8; }
.buy { display: flex; align-items: center; justify-content: center; gap: 3px; width: 71px; height: 18px; margin: 0 6px 0 7px; padding: 0; border: 0; border-radius: 2px; background: linear-gradient(90deg, #3c1d05, #1c0c02); color: #f7cf9b; font: inherit; font-feature-settings: inherit; white-space: nowrap; }
.buy .ic { color: #f7cf9b; }
.avatar { width: 19px; height: 19px; margin-right: 7px; border-radius: 50%; border: 1px solid #ead9b8; background: #fdf5e2; color: #6b4a1a; font-weight: 700; line-height: 16px; text-align: center; }
.win { width: 24px; }

.menubar { display: flex; align-items: center; flex: none; height: 25px; background: #f3f4fa; }
.w30 { width: 30px; }
.file { width: 54px; gap: 4px; justify-content: flex-start; padding-left: 3px; }
.quick { display: flex; align-items: center; width: 174px; padding-left: 14px; }
.quick .b { width: 24px; justify-content: flex-start; gap: 4px; }
.quick .b:first-child, .quick .b:nth-child(5) { width: 32px; }
.tabs { display: grid; grid-template-columns: 43px 44px 46px 46px 40px 44px 34px; padding-left: 11px; }
.tabs a { color: inherit; text-align: center; text-decoration: none; line-height: 25px; white-space: nowrap; }
.tabs span { position: relative; }
.tabs a.on { color: #0a84ff; font-weight: 500; }
.tabs a.on span { display: inline-block; }
.tabs a.on span::after { content: ""; position: absolute; left: 1px; right: 1px; bottom: 1px; height: 1px; background: #0a84ff; }
.tabs em { position: absolute; left: 10px; top: -4px; width: 18px; height: 9px; border-radius: 5px 5px 5px 0; background: linear-gradient(90deg, #7a45ff, #4c7dff); color: #fff; font-size: 8px; line-height: 8px; text-align: center; }
.links { display: flex; align-items: center; gap: 8px; padding-right: 17px; }
.links .b { gap: 3px; }
.help { position: relative; }
.help .dot { position: absolute; left: 11px; top: -2px; width: 4px; height: 4px; }

.ribbon { display: grid; grid-template-columns: 67fr 278fr 144fr 336fr 201fr 77fr; flex: none; padding: 7px 6px 6px 0; background: #fff; }
.group { position: relative; display: flex; flex-direction: column; border-right: 1px solid #ececef; height: 61px; }
.group.tools, .group.style { border-right: 0; }
.group .row { display: flex; align-items: center; height: 18px; margin-bottom: 8px; }
.group p { margin: auto 0 0; color: #8a8a8a; font-size: 8px; text-align: center; line-height: 12px; white-space: nowrap; }
.clip .row { padding-left: 11px; gap: 9px; }
.clip .b { gap: 1px; }
.font .row { padding-left: 7px; }
.font .row.first { padding-left: 12px; }
.combo { display: flex; align-items: center; height: 18px; padding: 0 4px; border: 1px solid #e9e9ec; border-radius: 2px; background: #fff; }
.family { width: 125px; gap: 6px; }
.points { width: 48px; margin: 0 2px 0 5px; padding-left: 7px; }
.w24 { width: 24px; }
.w21 { width: 21px; }
.drop { width: 27px; gap: 2px; }
.launch { position: absolute; right: 8px; bottom: 2px; }
.lab { height: 18px; justify-content: flex-start; gap: 4px; }
.pairs, .triples { display: grid; row-gap: 8px; justify-items: start; }
.pairs { grid-template-columns: 63px 1fr; padding-left: 11px; }
.pressed { padding: 0 3px; background: #f4f4f4; }
.second { padding-left: 3px; }
.triples { grid-template-columns: 56px 74px 1fr; padding-left: 11px; }
.swap .tall { flex-direction: column; line-height: 14px; padding-top: 2px; gap: 6px; }
.swap .tall .caret { margin-top: -7px; }
.style::after { content: ""; position: absolute; inset: -10px 0 -6px 1px; border: 3px solid #ec1c24; pointer-events: none; }
.style .launch { right: 9px; }
.stylebody { display: flex; padding-left: 14px; }
.gallery { display: flex; align-items: center; gap: 6px; width: 234px; height: 44px; padding: 3px 0 0 8px; border: 1px solid #ededf0; border-radius: 3px; }
.sw { flex: none; width: 24px; height: 25px; padding: 0; border: 1px solid transparent; border-radius: 2px; background: #fff; color: #222; font: 9px/12px "Liberation Sans", sans-serif; }
.sw.teal { background: #e5f2f3; }
.sw.slate { background: #e7e8f0; }
.sw.gray { background: #eaeaea; }
.sw.line { border-color: #85858c; }
.sw.rose { border-color: #9b8590; }
.sw.selected { outline: 1px solid #5ea9fb; outline-offset: 2px; }
.scroller { display: flex; flex-direction: column; align-items: center; justify-content: space-between; width: 10px; height: 36px; margin: -3px 0 0 4px; }
.effects { display: flex; flex-direction: column; margin-left: 12px; }
.effects .lab { height: 15px; }

.body { display: grid; grid-template-columns: 155px 1fr 24px; flex: 1; min-height: 0; border-top: 1px solid #e9e9ec; background: #fff; }
.panel { display: flex; flex-direction: column; min-height: 0; border-right: 1px solid #ebebee; font-size: 10px; line-height: 14px; }
.phead { display: flex; align-items: center; height: 26px; padding: 0 6px 0 8px; gap: 5px; color: #222; }
.phead .caret { margin-left: -3px; }
.phead b { font-weight: 500; }
.search { display: flex; align-items: center; height: 23px; margin: 4px 5px 0 6px; padding: 0 4px 0 7px; border-radius: 3px; background: #f3f3f9; }
.search input { flex: 1; min-width: 0; padding: 0; border: 0; background: none; font: inherit; color: #333; outline: 0; }
.search input::placeholder { color: #8c8c92; }
.search button { width: 31px; height: 16px; padding: 0; border: 0; border-radius: 2px; background: #0080ff; color: #fff; font: 9px/14px "Noto Sans", "Noto Sans CJK JP", sans-serif; }
.panel hr { width: 130px; height: 1px; margin: 5px 0 0 12px; border: 0; background: #e9e9ee; }
.lib { display: flex; align-items: center; height: 31px; padding: 4px 9px 0 12px; gap: 4px; font-size: 9px; }
.lib .b { gap: 3px; }
.scrollable { position: relative; flex: 1; min-height: 0; overflow: hidden; padding-right: 4px; }
.scrollable::after { content: ""; position: absolute; right: 0; top: 0; width: 4px; height: 62%; border-radius: 2px; background: #dcdce2; }
.sect { display: flex; align-items: center; height: 26px; padding: 0 4px 0 8px; gap: 5px; }
.sect.open { background: #eeeeef; border-radius: 2px; }
.sect.last { margin-top: 2px; }
.tri { border: 3px solid transparent; border-top: 5px solid #666; border-bottom: 0; }
.tri.side { border: 3px solid transparent; border-left: 5px solid #aaa; border-right: 0; }
.dropzone { width: 128px; margin: 10px 0 10px 11px; padding: 8px 0; border: 1px dashed #ececf0; border-radius: 2px; color: #a2a2a2; text-align: center; }
.shapes { display: grid; grid-template-columns: repeat(4, 36px); padding: 5px 0 0 3px; }
.shapes svg { width: 30px; height: 36px; margin: 0 3px; fill: none; stroke: #a3a3a8; stroke-width: 1; }
.shapes text { font-size: 8px; fill: #666; stroke: none; text-anchor: middle; }

.work { display: grid; grid-template-columns: 14px 1fr 10px; grid-template-rows: 12px 1fr 9px 12px; min-width: 0; min-height: 0; overflow: hidden; }
.hruler, .vruler { display: block; width: 100%; height: 100%; overflow: hidden; background: #fff; }
.hruler { border-bottom: 1px solid #ececef; }
.vruler { border-right: 1px solid #ececef; }
.hruler path, .vruler path { stroke: #dedee2; }
.hruler text, .vruler text { font-size: 8px; fill: #888; }
.vruler text { text-anchor: end; }
.canvas { position: relative; min-height: 0; background: #ebeaf1; }
.sheet { position: absolute; inset: 0; width: 100%; height: 100%; overflow: hidden; }
.doc { fill: #fff; stroke: #777c84; }
.sel { fill: none; stroke: #4b9ff5; stroke-dasharray: 3 2; }
.handle { fill: #fff; stroke: #4b9ff5; }
.rot { fill: none; stroke: #4b8fe0; }
.aibadge { position: absolute; right: 18px; top: 18px; display: grid; place-items: center; width: 26px; height: 26px; padding: 0; border: 0; border-radius: 50%; background: #fff; }
.aibadge .ic { width: 18px; height: 18px; }
.vscroll, .hscroll { position: relative; background: #fdfdfd; }
.vscroll i { position: absolute; left: 2px; top: 26%; width: 6px; height: 43%; border-radius: 3px; background: #d2d2d4; }
.hscroll { grid-column: 1 / 4; }
.hscroll i { position: absolute; left: 9%; right: 11.5%; top: 1px; height: 7px; border-radius: 4px; background: #d2d2d4; }
.colors { grid-column: 1 / 4; display: flex; gap: 1px; padding: 1px 10px 0 7px; background: #fff; }
.bucket { width: 18px; gap: 1px; }
.chip { flex: 1; height: 11px; border-radius: 1px; }

.float { position: absolute; left: 12px; top: 147px; display: flex; height: 59px; padding: 6px 3px 5px 0; border-radius: 4px; background: #fff; box-shadow: 0 0 4px rgba(60, 60, 80, .25); }
.cell { flex-direction: column; justify-content: flex-start; gap: 7px; font-size: 8px; line-height: 12px; padding-top: 4px; }
.float .ai { width: 46px; border-right: 1px solid #ececef; gap: 5px; }
.mini { width: 122px; padding-left: 7px; border-right: 1px solid #ececef; }
.mini .row { display: flex; margin-bottom: 3px; }
.mini .family { width: 68px; padding-left: 4px; gap: 4px; }
.mini .points { width: 36px; margin: 0 0 0 4px; padding-left: 4px; }
.mini .spread { justify-content: space-between; padding: 0 8px 0 2px; }
.copyfmt { width: 58px; border-right: 1px solid #ececef; }
.trio { display: grid; grid-template-columns: 38px 38px 33px; width: 110px; border-right: 1px solid #ececef; }
.duo { display: grid; grid-template-columns: 38px 42px; width: 84px; border-right: 1px solid #ececef; }
.rep { width: 36px; gap: 5px; }
.pins { display: flex; flex-direction: column; justify-content: space-between; }
.pins .ic { color: #999; }

.rail { display: flex; flex-direction: column; border-left: 1px solid #e9e9ec; }
.rail .b { height: 33px; }
.rail .slim { height: 23px; }
.rail .active { height: 26px; margin-bottom: 4px; background: #0080ff; }
.rail .active .ic { color: #fff; }

.status { display: flex; align-items: center; flex: none; height: 22px; background: #f2f3fa; border-radius: 0 0 5px 5px; }
.pages { width: 37px; height: 14px; border-right: 1px solid #dfe0e6; padding-left: 4px; }
.pagesel { display: flex; align-items: center; width: 96px; padding: 0 7px 0 12px; border-right: 1px solid #dfe0e6; }
.add { width: 30px; height: 14px; border-right: 1px solid #dfe0e6; }
.page { width: 55px; border-right: 1px solid #dfe0e6; color: #0a84ff; text-align: center; text-decoration: none; }
.count { width: 128px; padding: 0 2px 0 6px; border-left: 1px solid #dfe0e6; white-space: nowrap; }
.count div { display: flex; justify-content: space-between; }
.count a { color: #f5873a; text-decoration: none; }
progress { appearance: none; display: block; width: 120px; height: 2px; margin-top: 2px; border: 0; }
progress::-webkit-progress-bar { background: #e2e3e8; }
progress::-webkit-progress-value { background: #58a6f8; }
.gem { width: 9px; height: 9px; margin: 0 6px 0 4px; }
.ident { width: 66px; padding-left: 6px; border-left: 1px solid #dfe0e6; border-right: 1px solid #dfe0e6; white-space: nowrap; }
.modes { display: flex; justify-content: space-between; width: 140px; padding: 0 7px 0 8px; border-right: 1px solid #dfe0e6; }
.modes .b { gap: 2px; }
.modes .full { gap: 5px; }
.zoom { display: flex; align-items: center; justify-content: space-between; width: 167px; padding: 0 8px; border-right: 1px solid #dfe0e6; }
.zoom .pct { gap: 3px; margin-left: 5px; }
.zoom input { appearance: none; width: 72px; height: 8px; margin: 0; background: linear-gradient(90deg, #444 26%, #fff 26%) center / 100% 2px no-repeat; }
.zoom input::-webkit-slider-thumb { appearance: none; width: 9px; height: 9px; border: 2px solid #333; border-radius: 50%; background: #fff; }
.fits { display: flex; gap: 12px; padding: 0 14px 0 7px; }
</style>
